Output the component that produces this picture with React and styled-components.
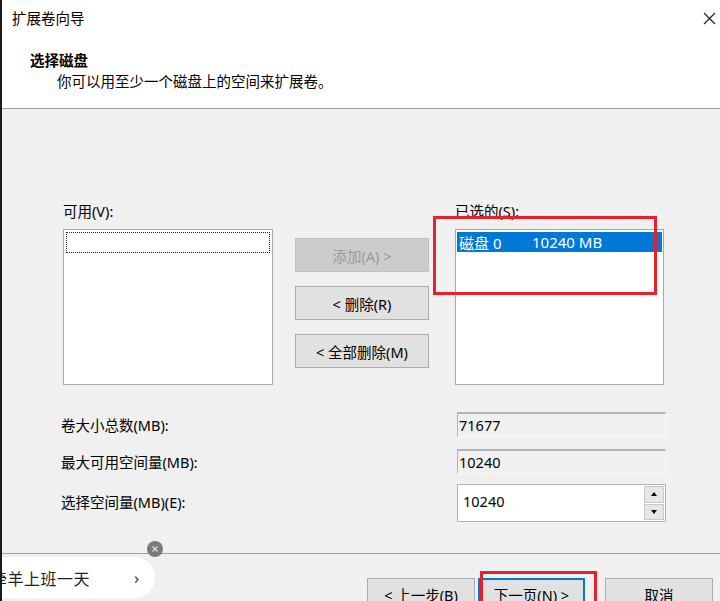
import React from "react";
import styled, { createGlobalStyle } from "styled-components";

const GlobalStyle = createGlobalStyle`
  html, body {
    margin: 0;
    padding: 0;
    background: #f0f0f0;
  }
  body {
    font-family: "Noto Sans", "Noto Sans CJK SC", sans-serif;
    font-size: 14px;
    color: #000;
  }
`;

const Window = styled.div`
  position: relative;
  width: 720px;
  height: 601px;
  overflow: hidden;
  box-sizing: border-box;
  border-left: 2px solid #1a1a1a;
  background: #f0f0f0;
  display: flex;
  flex-direction: column;
`;

const Header = styled.div`
  height: 108px;
  flex-shrink: 0;
  background: #fff;
  border-bottom: 1px solid #a0a0a0;
`;

const TitleBar = styled.div`
  height: 36px;
  display: flex;
  align-items: center;
  justify-content: space-between;
  padding: 0 4px 0 10px;
`;

const Title = styled.div`
  font-size: 14.5px;
  line-height: 20px;
`;

const CloseButton = styled.div`
  width: 13px;
  height: 13px;
  display: flex;
`;

const Heading = styled.div`
  margin: 14px 0 0 28px;
  font-size: 14.5px;
  line-height: 20px;
  font-weight: 700;
`;

const Subtitle = styled.div`
  margin: 1px 0 0 55px;
  font-size: 14.5px;
  line-height: 20px;
`;

const Body = styled.div`
  height: 444px;
  flex-shrink: 0;
  box-sizing: border-box;
  padding: 93px 0 0 59px;
`;

const ListRow = styled.div`
  display: flex;
  align-items: flex-start;
`;

const ListColumn = styled.div`
  display: flex;
  flex-direction: column;
  margin-left: ${(p) => p.$offset || 0}px;
`;

const Label = styled.div`
  font-size: 14.5px;
  line-height: 18px;
  height: 18px;
  margin-bottom: 9px;
`;

const ListBox = styled.div`
  width: ${(p) => p.$width}px;
  height: 156px;
  box-sizing: border-box;
  background: #fff;
  border: 1px solid #a5a9b0;
  padding: 2px 1px;
`;

const FocusRow = styled.div`
  height: 21px;
  box-sizing: border-box;
  border: 1px dotted #222;
  margin: 0 1px;
`;

const SelectedRow = styled.div`
  height: 20px;
  display: flex;
  align-items: center;
  background: #0078d7;
  color: #fff;
  font-size: 15px;
  padding-left: 2px;
`;

const DiskName = styled.span`
  width: 73px;
`;

const ButtonColumn = styled.div`
  display: flex;
  flex-direction: column;
  gap: 14px;
  padding-top: 36px;
  margin-left: 22px;
`;

const Button = styled.div`
  width: ${(p) => p.$width}px;
  height: ${(p) => p.$height || 34}px;
  box-sizing: border-box;
  display: flex;
  align-items: center;
  justify-content: center;
  font-size: 14.5px;
  background: ${(p) => (p.$disabled ? "#cccccc" : "#e1e1e1")};
  color: ${(p) => (p.$disabled ? "#9a9a9a" : "#000")};
  border: ${(p) =>
    p.$focused ? "2px solid #0078d7" : p.$disabled ? "1px solid #bfbfbf" : "1px solid #adadad"};
`;

const FieldGrid = styled.div`
  display: grid;
  grid-template-columns: 396px 209px;
  grid-template-rows: 25px 25px 38px;
  row-gap: 12px;
  margin-top: 27px;
  align-items: center;
`;

const FieldLabel = styled.div`
  font-size: 14.5px;
  line-height: 18px;
  margin-top: ${(p) => p.$shift || 0}px;
`;

const ReadOnlyField = styled.div`
  height: 25px;
  box-sizing: border-box;
  border-top: 2px solid #b4b4b4;
  border-left: 1px solid #b4b4b4;
  border-right: 1px solid #fafafa;
  border-bottom: 1px solid #fafafa;
  display: flex;
  align-items: center;
  padding-left: 1px;
  font-size: 14.5px;
`;

const SpinBox = styled.div`
  height: 38px;
  box-sizing: border-box;
  background: #fff;
  border: 1px solid #b4b4b4;
  display: flex;
  margin-top: -4px;
`;

const SpinText = styled.div`
  flex: 1;
  padding: 7px 0 0 5px;
  font-size: 14.5px;
  line-height: 18px;
`;

const SpinButtons = styled.div`
  width: 20px;
  display: flex;
  flex-direction: column;
  gap: 1px;
  padding: 1px 1px 1px 0;
  background: #fff;
`;

const SpinArrow = styled.div`
  flex: 1;
  background: #e6e6e6;
  border: 1px solid #c8c8c8;
  display: flex;
  align-items: center;
  justify-content: center;
  &::after {
    content: "";
    border-left: 3px solid transparent;
    border-right: 3px solid transparent;
    ${(p) => (p.$down ? "border-top: 4px solid #000;" : "border-bottom: 4px solid #000;")}
  }
`;

const Footer = styled.div`
  flex: 1;
  border-top: 1px solid #a0a0a0;
  display: flex;
  justify-content: flex-end;
  align-items: flex-start;
  padding: 24px 7px 0 0;
  gap: 3px;
`;

const CancelGap = styled.div`
  width: 14px;
`;

const RedBox = styled.div`
  position: absolute;
  left: ${(p) => p.$x}px;
  top: ${(p) => p.$y}px;
  width: ${(p) => p.$w}px;
  height: ${(p) => p.$h}px;
  box-sizing: border-box;
  border: 3px solid #e8202a;
  pointer-events: none;
`;

const Toast = styled.div`
  position: absolute;
  left: -2px;
  top: 557px;
  width: 155px;
  height: 41px;
  background: #fff;
  border-radius: 0 21px 21px 0;
  display: flex;
  align-items: center;
  overflow: hidden;
`;

const ToastText = styled.div`
  margin-left: -9px;
  font-size: 16px;
  letter-spacing: 0.5px;
  color: #222;
  white-space: nowrap;
  width: 143px;
`;

const ToastChevron = styled.div`
  font-size: 17px;
  color: #333;
`;

const ToastClose = styled.div`
  position: absolute;
  left: 145px;
  top: 541px;
  width: 16px;
  height: 16px;
  border-radius: 50%;
  background: #7a7a7a;
  display: flex;
  align-items: center;
  justify-content: center;
`;

export default function App() {
  return (
    <>
      <GlobalStyle />
      <Window>
        <Header>
          <TitleBar>
            <Title>扩展卷向导</Title>
            <CloseButton>
              <svg width="13" height="13" viewBox="0 0 13 13">
                <path d="M1 1 L12 12 M12 1 L1 12" stroke="#222" strokeWidth="1.2" />
              </svg>
            </CloseButton>
          </TitleBar>
          <Heading>选择磁盘</Heading>
          <Subtitle>你可以用至少一个磁盘上的空间来扩展卷。</Subtitle>
        </Header>

        <Body>
          <ListRow>
            <ListColumn $offset={2}>
              <Label>可用(V):</Label>
              <ListBox $width={210}>
                <FocusRow />
              </ListBox>
            </ListColumn>
            <ButtonColumn>
              <Button $width={134} $disabled>添加(A) &gt;</Button>
              <Button $width={134}>&lt; 删除(R)</Button>
              <Button $width={134}>&lt; 全部删除(M)</Button>
            </ButtonColumn>
            <ListColumn $offset={26}>
              <Label>已选的(S):</Label>
              <ListBox $width={209}>
                <SelectedRow>
                  <DiskName>磁盘 0</DiskName>
                  <span>10240 MB</span>
                </SelectedRow>
              </ListBox>
            </ListColumn>
          </ListRow>

          <FieldGrid>
            <FieldLabel>卷大小总数(MB):</FieldLabel>
            <ReadOnlyField>71677</ReadOnlyField>
            <FieldLabel>最大可用空间量(MB):</FieldLabel>
            <ReadOnlyField>10240</ReadOnlyField>
            <FieldLabel $shift={-6}>选择空间量(MB)(E):</FieldLabel>
            <SpinBox>
              <SpinText>10240</SpinText>
              <SpinButtons>
                <SpinArrow />
                <SpinArrow $down />
              </SpinButtons>
            </SpinBox>
          </FieldGrid>
        </Body>

        <Footer>
          <Button $width={108} $height={32}>&lt; 上一步(B)</Button>
          <Button $width={107} $height={32} $focused>下一页(N) &gt;</Button>
          <CancelGap />
          <Button $width={108} $height={32}>取消</Button>
        </Footer>

        <RedBox $x={431} $y={216} $w={224} $h={79} />
        <RedBox $x={478} $y={571} $w={117} $h={40} />

        <Toast>
          <ToastText>牵羊上班一天</ToastText>
          <ToastChevron>›</ToastChevron>
        </Toast>
        <ToastClose>
          <svg width="8" height="8" viewBox="0 0 8 8">
            <path d="M1.5 1.5 L6.5 6.5 M6.5 1.5 L1.5 6.5" stroke="#ddd" strokeWidth="1.3" />
          </svg>
        </ToastClose>
      </Window>
    </>
  );
}
